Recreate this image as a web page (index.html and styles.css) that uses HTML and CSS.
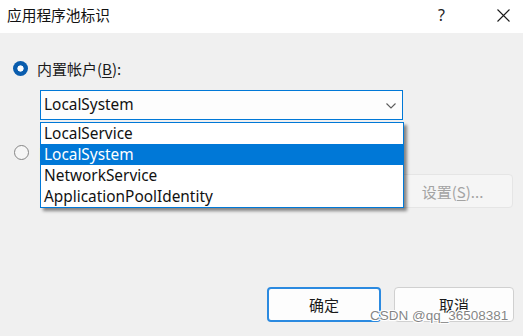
FILE: index.html
```html
<!DOCTYPE html>
<html lang="zh-CN">
<head>
<meta charset="utf-8">
<title>应用程序池标识</title>
<link rel="stylesheet" href="styles.css">
</head>
<body>
<div class="window">
  <header class="titlebar">
    <span class="title">应用程序池标识</span>
    <span class="help">?</span>
    <span class="close">
      <svg width="13" height="13" viewBox="0 0 13 13"><path d="M0.5 0.5 L12.5 12.5 M12.5 0.5 L0.5 12.5" stroke="#1b1b1b" stroke-width="1.1" fill="none"/></svg>
    </span>
  </header>
  <main class="content">
    <div class="option">
      <span class="radio checked"></span>
      <span class="label">内置帐户(<u>B</u>):</span>
    </div>
    <div class="combo-wrap">
      <div class="combo">
        <span class="combo-value">LocalSystem</span>
        <svg class="chevron" width="10" height="6" viewBox="0 0 10 6"><path d="M0.5 0.5 L5 5 L9.5 0.5" stroke="#5c5c5c" stroke-width="1.1" fill="none"/></svg>
      </div>
      <ul class="listbox">
        <li class="item">LocalService</li>
        <li class="item selected">LocalSystem</li>
        <li class="item">NetworkService</li>
        <li class="item">ApplicationPoolIdentity</li>
      </ul>
    </div>
    <div class="option second">
      <span class="radio"></span>
      <span class="label">自定义帐户(<u>C</u>):</span>
    </div>
    <div class="settings-row">
      <button class="btn settings" disabled>设置(<u>S</u>)...</button>
    </div>
  </main>
  <footer class="actions">
    <button class="btn ok">确定</button>
    <button class="btn cancel">取消</button>
  </footer>
  <div class="watermark">CSDN @qq_36508381</div>
</div>
</body>
</html>
```
FILE: styles.css
```css
* { box-sizing: border-box; }
html, body { margin: 0; padding: 0; }
body {
  width: 523px;
  height: 336px;
  overflow: hidden;
  background: #f0f0f0;
  font-family: "Noto Sans", "Noto Sans CJK SC", sans-serif;
  font-size: 15px;
  color: #1a1a1a;
}
.window {
  position: relative;
  width: 523px;
  height: 336px;
  display: flex;
  flex-direction: column;
}
.titlebar {
  height: 33px;
  background: #ffffff;
  display: flex;
  align-items: center;
  padding-left: 7px;
  flex: none;
}
.title {
  font-family: "Noto Sans CJK SC", sans-serif;
  font-size: 14.7px;
  color: #111;
  flex: 1;
  line-height: 1;
  margin-top: -2px;
}
.help {
  font-family: "Noto Sans", sans-serif;
  font-size: 16px;
  color: #222;
  width: 10px;
  margin-right: 49px;
  margin-top: -3px;
}
.close {
  display: flex;
  margin-right: 13px;
  margin-top: -2px;
}
.content {
  padding: 27px 10px 0 13px;
  flex: none;
}
.option {
  display: flex;
  align-items: center;
  height: 17px;
  gap: 9px;
}
.radio {
  width: 15px;
  height: 15px;
  border-radius: 50%;
  border: 1px solid #858585;
  background: #f6f6f6;
  flex: none;
}
.radio.checked {
  border: none;
  background: radial-gradient(circle, #ffffff 0 2.8px, #0a5dae 3.4px);
}
.option.second .radio { margin-left: 1px; }
.label {
  font-family: "Noto Sans CJK SC", sans-serif;
  line-height: 17px;
  color: #1a1a1a;
}
.label u { text-underline-offset: 2px; }
.combo-wrap {
  position: relative;
  margin: 13px 0 0 27px;
  width: 363px;
}
.combo {
  height: 30px;
  border: 1px solid #0078d7;
  background: #fdfdfd;
  display: flex;
  align-items: center;
  padding: 0 5px 0 3px;
  font-size: 15.4px;
}
.combo-value { flex: 1; line-height: 1; margin-top: -1px; color: #111; }
.chevron { margin-right: 1px; margin-top: 1px; }
.listbox {
  position: absolute;
  left: 0;
  top: calc(100% + 2px);
  width: 364px;
  margin: 0;
  padding: 0;
  list-style: none;
  background: #ffffff;
  border: 1px solid #0078d7;
  box-shadow: 3px 3px 3px rgba(0, 0, 0, 0.45);
  z-index: 2;
  font-size: 15.4px;
}
.item {
  height: 21px;
  line-height: 22px;
  padding-left: 3px;
  color: #111;
}
.item.selected {
  background: #0078d7;
  color: #ffffff;
}
.option.second { margin-top: 24px; }
.settings-row {
  display: flex;
  justify-content: flex-end;
  margin-top: 13px;
}
.btn {
  font-family: "Noto Sans CJK SC", sans-serif;
  font-size: 15px;
  border-radius: 4px;
  background: #fdfdfd;
  border: 1px solid #d0d0d0;
  color: #1a1a1a;
  padding: 0;
  line-height: 1;
}
.settings {
  width: 125px;
  height: 34px;
  background: #f5f5f5;
  border-color: #e5e5e5;
  color: #a3a3a3;
  padding-left: 4px;
}
.settings u { text-underline-offset: 2px; }
.actions {
  margin-top: auto;
  display: flex;
  justify-content: flex-end;
  gap: 13px;
  padding: 0 9px 14px 0;
}
.ok {
  width: 114px;
  height: 35px;
  border: 2px solid #2b8ae0;
}
.cancel {
  width: 120px;
  height: 35px;
}
.watermark {
  position: absolute;
  left: 370px;
  top: 308px;
  font-family: "Liberation Sans", Arial, sans-serif;
  font-size: 13.5px;
  color: rgba(110, 110, 110, 0.85);
  text-shadow: 1px 1px 0 #fff, -1px -1px 0 #fff, 1px -1px 0 #fff, -1px 1px 0 #fff;
  white-space: nowrap;
  z-index: 3;
}
```
